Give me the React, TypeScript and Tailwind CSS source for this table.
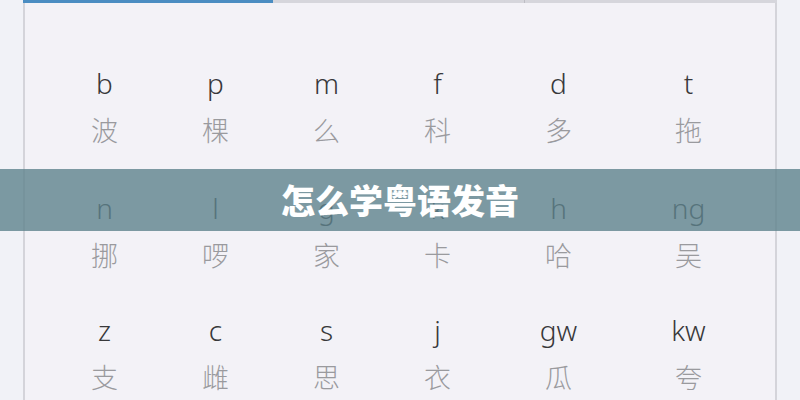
import React from "react";

type Cell = { initial: string; char: string };

const rows: Cell[][] = [
  [
    { initial: "b", char: "波" },
    { initial: "p", char: "棵" },
    { initial: "m", char: "么" },
    { initial: "f", char: "科" },
    { initial: "d", char: "多" },
    { initial: "t", char: "拖" },
  ],
  [
    { initial: "n", char: "挪" },
    { initial: "l", char: "啰" },
    { initial: "g", char: "家" },
    { initial: "k", char: "卡" },
    { initial: "h", char: "哈" },
    { initial: "ng", char: "吴" },
  ],
  [
    { initial: "z", char: "支" },
    { initial: "c", char: "雌" },
    { initial: "s", char: "思" },
    { initial: "j", char: "衣" },
    { initial: "gw", char: "瓜" },
    { initial: "kw", char: "夸" },
  ],
];

const font = {
  fontFamily: '"Noto Sans", "Noto Sans CJK SC", sans-serif',
};

const InitialRow: React.FC<{ cells: Cell[]; className?: string }> = ({
  cells,
  className,
}) => (
  <div className={className}>
    <div className="grid grid-cols-[111px_111px_111px_111px_131px_129px] h-[34px] items-center text-[28px] font-light leading-none text-[#38383a]">
      {cells.map((c) => (
        <div key={c.initial} className="text-center">
          {c.initial}
        </div>
      ))}
    </div>
    <div className="mt-[13px] grid grid-cols-[111px_111px_111px_111px_131px_129px] h-[34px] items-center text-[27px] font-extralight leading-none text-[#9a9a9e]">
      {cells.map((c) => (
        <div key={c.char} className="text-center">
          {c.char}
        </div>
      ))}
    </div>
  </div>
);

export default function App() {
  return (
    <div
      className="relative w-[800px] h-[400px] overflow-hidden bg-[#f1f2f7]"
      style={font}
    >
      <div className="ml-[23px] w-[754px] h-full flex flex-col">
        <div className="flex h-[3px] shrink-0">
          <div className="w-[250px] bg-[#4b8dc2]" />
          <div className="w-[252px] bg-[#d6d6dc] border-r border-[#bdbdc4]" />
          <div className="flex-1 bg-[#d6d6dc]" />
        </div>
        <div className="flex-1 bg-[#f3f2f7] border-x-2 border-[#d4d4da] pl-[24px] pt-[63px]">
          <InitialRow cells={rows[0]} />
          <InitialRow cells={rows[1]} className="mt-[44px]" />
          <InitialRow cells={rows[2]} className="mt-[41px]" />
        </div>
      </div>

      <div className="absolute left-0 right-0 top-[169px] h-[62px] bg-[#5e828c]/80 flex items-center justify-center">
        <span
          className="text-white text-[34px] font-black leading-none"
          style={{ fontFamily: '"Noto Sans CJK SC", sans-serif' }}
        >
          怎么学粤语发音
        </span>
      </div>
    </div>
  );
}
